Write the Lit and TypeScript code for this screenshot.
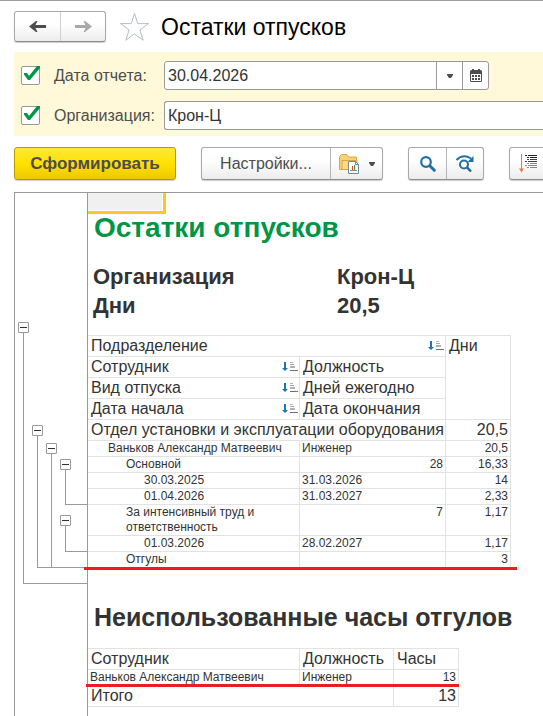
import { LitElement, html, css, svg, nothing } from "lit";
import { customElement, state } from "lit/decorators.js";
import { classMap } from "lit/directives/class-map.js";

interface ReportRow {
  level: "dept" | "employee" | "kind" | "period";
  name: string;
  info?: string;
  infoRight?: boolean;
  days: string;
}

const ROWS: ReportRow[] = [
  { level: "dept", name: "Отдел установки и эксплуатации оборудования", days: "20,5" },
  { level: "employee", name: "Ваньков Александр Матвеевич", info: "Инженер", days: "20,5" },
  { level: "kind", name: "Основной", info: "28", infoRight: true, days: "16,33" },
  { level: "period", name: "30.03.2025", info: "31.03.2026", days: "14" },
  { level: "period", name: "01.04.2026", info: "31.03.2027", days: "2,33" },
  { level: "kind", name: "За интенсивный труд и ответственность", info: "7", infoRight: true, days: "1,17" },
  { level: "period", name: "01.03.2026", info: "28.02.2027", days: "1,17" },
  { level: "kind", name: "Отгулы", info: "", days: "3" },
];

const HEAD: [string, string][] = [
  ["Сотрудник", "Должность"],
  ["Вид отпуска", "Дней ежегодно"],
  ["Дата начала", "Дата окончания"],
];

const arrow = svg`<path d="M0 5.5 7 0H8.500L6.500 4H17v3H6.500l2 4H7z" fill="currentColor"/>`;

const sortIcon = html`<svg class="sort" width="16" height="12" viewBox="0 0 16 12" aria-hidden="true">
  <path d="M2 1h2v6h2L3 10 0 7h2z" fill="#1f74b5" />
  <path d="M8 1.5h3" stroke="#b5b5b5" />
  <path d="M8 3.5h4" stroke="#a6a6a6" />
  <path d="M8 6h5" stroke="#b0b0b0" stroke-width="2" />
  <path d="M8 9.5h8" stroke="#707070" />
</svg>`;

const caret = html`<svg width="6" height="4" viewBox="0 0 6 4" aria-hidden="true">
  <path d="M0 0h6v1L4 4H2L0 1z" fill="#4d4d4d" />
</svg>`;

@customElement("app-root")
export class AppRoot extends LitElement {
  @state() private byDate = true;
  @state() private byOrg = true;

  static styles = css`
    :host {
      display: flex;
      flex-direction: column;
      box-sizing: border-box;
      min-height: 100vh;
      overflow: hidden;
      padding-left: 14px;
      border-top: 1px solid #9c9c9c;
      background: #fff;
      color: #333;
      font: 16px/20px "Liberation Sans", Arial, sans-serif;
    }
    * { box-sizing: border-box; }
    svg { display: block; flex: none; }
    button, input { font: inherit; color: inherit; margin: 0; padding: 0; }
    h1, h2, dl, dd { margin: 0; }

    header { display: flex; align-items: center; padding: 10px 0; height: 51px; }
    h1 { color: #000; font-size: 23px; line-height: 30px; font-weight: 400; white-space: nowrap; }
    .star { border: 0; background: none; margin: 0 11px 0 13px; }

    .group {
      display: flex;
      flex: none;
      border: 1px solid #a8a8a8;
      border-bottom-color: #8c8c8c;
      border-radius: 3px;
      background: linear-gradient(#fff 40%, #ececec);
      box-shadow: 0 1px 1px #ccc;
      overflow: hidden;
    }
    .group button {
      display: flex;
      align-items: center;
      justify-content: center;
      border: 0;
      background: none;
      color: #4d4d4d;
      white-space: nowrap;
    }
    .group button + button { border-left: 1px solid #b5b5b5; }
    .nav { height: 31px; }
    .nav button { width: 45px; }
    .nav .forward { color: #a8a8a8; border-left-color: #d0d0d0; }
    .forward svg { transform: scaleX(-1); }

    .filters {
      display: grid;
      grid-template-columns: 19px 96px 1fr;
      column-gap: 14px;
      row-gap: 11px;
      align-items: center;
      height: 84px;
      padding: 9px 0 6px 7px;
      background: #fff9d9;
      color: #4d4d4d;
    }
    .tick { display: grid; }
    .tick > * { grid-area: 1 / 1; }
    .tick input {
      appearance: none;
      width: 19px;
      height: 19px;
      border: 1px solid #999;
      border-radius: 2px;
      background: #fff;
    }
    .tick svg { pointer-events: none; }
    .filters label { white-space: nowrap; }
    .field {
      display: flex;
      height: 29px;
      border: 1px solid #999;
      border-radius: 3px;
      background: #fff;
      overflow: hidden;
    }
    .field input { flex: 1; min-width: 0; border: 0; padding-left: 3px; background: none; color: #333; outline: 0; }
    .field button {
      display: flex;
      align-items: center;
      justify-content: center;
      width: 26px;
      border: 0;
      border-left: 1px solid #999;
      background: none;
    }
    .date { width: 325px; }
    .open { border-right: 0; border-radius: 3px 0 0 3px; }

    .tools { display: flex; gap: 25px; padding: 11px 0 12px; }
    .tools .group, .run { height: 33px; }
    .run {
      flex: none;
      width: 162px;
      border: 1px solid #b59c00;
      border-radius: 3px;
      background: linear-gradient(#ffe838, #ffe100 50%, #ecc800);
      box-shadow: 0 1px 1px #ccc;
      color: #4d4d4d;
      font-size: 17px;
      font-weight: 700;
    }
    .settings { width: 128px; }
    .variants { width: 52px; gap: 10px; }
    .find { width: 37px; }
    .order { width: 60px; }
    .order svg { margin-right: 18px; }

    .sheet { display: flex; flex: 1; border: solid #999; border-width: 1px 0 0 1px; }
    .outline {
      display: grid;
      flex: none;
      width: 73px;
      padding-left: 3px;
      border-right: 1px solid #999;
      grid-template-columns: repeat(3, 14px) 1fr;
      grid-template-rows: 129px 103px 18px 16px 46px 10px 37px 16px 16px;
    }
    .node { display: flex; flex-direction: column; }
    .node button {
      width: 11px;
      height: 11px;
      border: 1px solid #999;
      border-radius: 1px;
      background: #fff;
      display: grid;
      place-items: center;
    }
    .dash { width: 7px; height: 1px; background: #333; }
    .stem { flex: 1; margin-left: 5px; border: solid #999; border-width: 0 0 1px 1px; }
    .n1 { grid-area: 2 / 1 / 10 / 5; }
    .n2 { grid-area: 3 / 2 / 9 / 5; }
    .n3 { grid-area: 4 / 3 / 9 / 5; }
    .n4 { grid-area: 5 / 4 / 6 / 5; }
    .n5 { grid-area: 7 / 4 / 8 / 5; }

    .report { flex: 1; min-width: 0; }
    .cell {
      width: 78px;
      height: 21px;
      border: solid #fac81e;
      border-width: 0 3px 3px 0;
      background: #f0f0f0;
      box-shadow: inset -1px -1px #fff;
    }
    h2 { padding-left: 6px; font-size: 25px; line-height: 28px; white-space: nowrap; }
    .title { color: #009646; font-size: 28px; }
    .facts {
      display: grid;
      grid-template-columns: 244px 1fr;
      padding-left: 5px;
      margin: 20px 0 15px;
      font-size: 22px;
      line-height: 29px;
      font-weight: 700;
    }
    .hours { margin: 35px 0 17px; }

    .marked { position: relative; width: fit-content; }
    .mark { position: absolute; height: 3px; background: #ed1c24; }
    .under-days { left: -4px; right: -6px; bottom: -2px; }
    .under-hours { left: -2px; right: 0; bottom: 20px; }

    table { table-layout: fixed; border-spacing: 0; border-top: 1px solid #e2e2e2; }
    .days { width: 423px; }
    .spare { width: 371px; }
    .c1 { width: 212px; }
    .c2 { width: 146px; }
    .c2s { width: 94px; }
    .c3 { width: 65px; }
    th, td {
      height: 21px;
      padding: 0 2px 0 3px;
      border: solid #e2e2e2;
      border-width: 0 1px 1px 0;
      font-weight: 400;
      text-align: left;
      vertical-align: top;
      white-space: nowrap;
    }
    .head { display: flex; justify-content: space-between; }
    .sort { margin: 4px -1px 0 0; }
    .small th, .small td { height: 16px; padding: 0 2px; font-size: 12px; line-height: 15px; }
    .small .employee { padding-left: 20px; }
    .small .kind { padding-left: 38px; white-space: normal; }
    .small .period { padding-left: 56px; }
    td.num { text-align: right; }
  `;

  private tick(id: string, on: boolean, set: (v: boolean) => void) {
    return html`<span class="tick">
      <input type="checkbox" id=${id} .checked=${on}
        @change=${(e: Event) => set((e.target as HTMLInputElement).checked)} />
      ${on
        ? html`<svg width="19" height="19" viewBox="0 0 19 19" aria-hidden="true">
            <path d="M3 7h3l2 3L16 0h3v2L9 14H7L3 8.500z" fill="#009646" />
          </svg>`
        : nothing}
    </span>`;
  }

  private node(n: number) {
    return html`<div class="node n${n}">
      <button aria-label="Свернуть группу"><span class="dash"></span></button>
      <div class="stem"></div>
    </div>`;
  }

  private row(r: ReportRow) {
    const dept = r.level === "dept";
    return html`<tr class=${classMap({ small: !dept })}>
      <td class=${r.level} colspan=${dept ? 2 : 1}>${r.name}</td>
      ${dept ? nothing : html`<td class=${classMap({ num: !!r.infoRight })}>${r.info}</td>`}
      <td class="num">${r.days}</td>
    </tr>`;
  }

  render() {
    return html`
      <header>
        <div class="group nav">
          <button aria-label="Назад"><svg width="17" height="11" viewBox="0 0 17 11">${arrow}</svg></button>
          <button class="forward" aria-label="Вперед"><svg width="17" height="11" viewBox="0 0 17 11">${arrow}</svg></button>
        </div>
        <button class="star" aria-label="В избранное">
          <svg width="31" height="30" viewBox="0 0 31 30">
            <path d="M15.5 1.5 18.8 11.6H29.5L20.9 18 24.2 28.2 15.5 21.9 6.8 28.2 10.1 18 1.5 11.6H12.2z" fill="#fff" stroke="#b4bcc4" />
          </svg>
        </button>
        <h1>Остатки отпусков</h1>
      </header>

      <section class="filters">
        ${this.tick("use-date", this.byDate, (v) => (this.byDate = v))}
        <label for="date">Дата отчета:</label>
        <div class="field date">
          <input id="date" type="text" value="30.04.2026" />
          <button aria-label="Выбрать из списка">${caret}</button>
          <button aria-label="Календарь">
            <svg width="12" height="13" viewBox="0 0 12 13">
              <path d="M0 2.5Q0 1 1.5 1H2V0h2v1h4V0h2v1h.5Q12 1 12 2.5v9q0 1.500-1.500 1.500h-9Q0 13 0 11.500z" fill="#4d4d4d" />
              <path d="M1 5h10v7H1z" fill="#fff" />
              <path d="M2 6h2v2H2zM5 6h2v2H5zM8 6h2v2H8zM2 9h2v2H2zM5 9h2v2H5zM8 9h2v2H8z" fill="#4d4d4d" />
            </svg>
          </button>
        </div>
        ${this.tick("use-org", this.byOrg, (v) => (this.byOrg = v))}
        <label for="org">Организация:</label>
        <div class="field open"><input id="org" type="text" value="Крон-Ц" /></div>
      </section>

      <div class="tools">
        <button class="run">Сформировать</button>
        <div class="group">
          <button class="settings">Настройки...</button>
          <button class="variants" aria-label="Варианты отчета">
            <svg width="20" height="20" viewBox="0 0 20 20">
              <path d="M.5 15.500V2.500L2.500.5h5l2 2.500H17.500v4H5L3 15.500z" fill="#f6d374" stroke="#dba545" />
              <path d="M3 15.500V6.500H18v9z" fill="#fbdc7c" stroke="#dba545" />
              <path d="M9.500 7.500h7l3 3v9h-10z" fill="#fff" stroke="#6f8796" />
              <path d="M16.500 7.500v3h3" fill="none" stroke="#6f8796" />
              <path d="M13.500 12v4" stroke="#e8452c" />
              <path d="M15.500 11v5" stroke="#3ba34a" />
              <path d="M11 16.500h7" stroke="#8a8a8a" />
            </svg>
            ${caret}
          </button>
        </div>
        <div class="group">
          <button class="find" aria-label="Найти">
            <svg width="16" height="16" viewBox="0 0 16 16">
              <circle cx="6" cy="6" r="4.800" fill="none" stroke="#236fa5" stroke-width="2.200" />
              <path d="m9.800 9.800 4.500 4.500" stroke="#236fa5" stroke-width="3" stroke-linecap="round" />
            </svg>
          </button>
          <button class="find" aria-label="Найти далее">
            <svg width="18" height="17" viewBox="0 0 18 17">
              <path d="M.5 5Q7-1.500 15 3.500" fill="none" stroke="#236fa5" stroke-width="2" />
              <path d="M17.500 1v6h-6z" fill="#236fa5" />
              <circle cx="8" cy="9.500" r="4" fill="none" stroke="#236fa5" stroke-width="2" />
              <path d="m11.200 12.700 3 3" stroke="#236fa5" stroke-width="2.600" stroke-linecap="round" />
            </svg>
          </button>
        </div>
        <div class="group">
          <button class="order" aria-label="Сортировка">
            <svg width="25" height="19" viewBox="0 0 25 19">
              <path d="M2.500 0v15" stroke="#f07a45" />
              <path d="M0 14.500h5L2.500 18.500z" fill="#f07a45" />
              <path d="M6 1.500h2M9 1.500h9M8 3.500h2M11 3.500h7" stroke="#222" />
              <path d="M8 5.500h2M11 5.500h7M6 7.500h2M9 7.500h9" stroke="#444" />
              <path d="M8 9.500h2M11 9.500h7M6 11.500h2M9 11.500h9M8 13.500h2M11 13.500h7" stroke="#888" />
            </svg>
          </button>
        </div>
      </div>

      <main class="sheet">
        <div class="outline">${[1, 2, 3, 4, 5].map((n) => this.node(n))}</div>
        <div class="report">
          <div class="cell"></div>
          <h2 class="title">Остатки отпусков</h2>
          <dl class="facts">
            <dt>Организация</dt>
            <dd>Крон-Ц</dd>
            <dt>Дни</dt>
            <dd>20,5</dd>
          </dl>

          <div class="marked">
            <table class="days">
              <colgroup><col class="c1" /><col class="c2" /><col class="c3" /></colgroup>
              <thead>
                <tr>
                  <th colspan="2"><div class="head">Подразделение ${sortIcon}</div></th>
                  <th rowspan="4">Дни</th>
                </tr>
                ${HEAD.map(
                  ([a, b]) => html`<tr><th><div class="head">${a} ${sortIcon}</div></th><th>${b}</th></tr>`
                )}
              </thead>
              <tbody>${ROWS.map((r) => this.row(r))}</tbody>
            </table>
            <div class="mark under-days"></div>
          </div>

          <h2 class="hours">Неиспользованные часы отгулов</h2>

          <div class="marked">
            <table class="spare">
              <colgroup><col class="c1" /><col class="c2s" /><col class="c3" /></colgroup>
              <thead>
                <tr><th>Сотрудник</th><th>Должность</th><th>Часы</th></tr>
              </thead>
              <tbody>
                <tr class="small"><td>Ваньков Александр Матвеевич</td><td>Инженер</td><td class="num">13</td></tr>
                <tr><td colspan="2">Итого</td><td class="num">13</td></tr>
              </tbody>
            </table>
            <div class="mark under-hours"></div>
          </div>
        </div>
      </main>
    `;
  }
}
